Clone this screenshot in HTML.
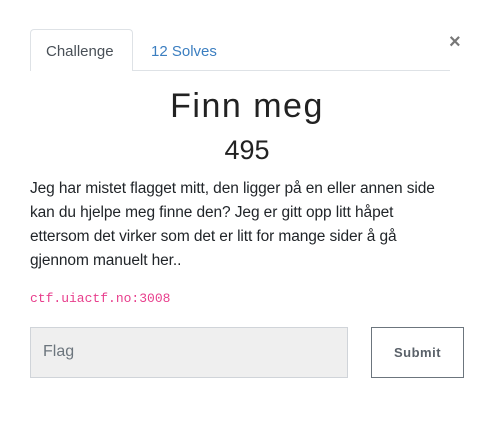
<!DOCTYPE html>
<html><head><meta charset="utf-8"><style>
body{margin:0;background:#fff;width:494px;height:425px;position:relative;font-family:"Liberation Sans",sans-serif;color:#212529;overflow:hidden}
.a{position:absolute;white-space:nowrap}
.tab{left:30px;top:29px;width:103px;height:42px;border:1px solid #dee2e6;border-bottom:none;border-radius:4px 4px 0 0;background:#fff;box-sizing:border-box}
</style></head><body>
<div class="a" style="left:30px;top:70px;width:420px;height:1px;background:#dee2e6"></div>
<div class="a tab"></div>
<div class="a" style="left:46px;top:43px;font-size:15px;color:#495057">Challenge</div>
<div class="a" style="left:151px;top:43px;font-size:15px;color:#3b7ec0">12 Solves</div>
<div class="a" style="left:449px;top:31px;font-size:20px;font-weight:bold;color:#777">×</div>
<div class="a" style="left:0;width:494px;text-align:center;top:87px;font-size:34px;letter-spacing:1.5px;color:#222">Finn meg</div>
<div class="a" style="left:0;width:494px;text-align:center;top:135px;font-size:27px;color:#222">495</div>
<div class="a" style="left:30px;top:177px;font-size:15.5px;line-height:24px;letter-spacing:-0.1px">Jeg har mistet flagget mitt, den ligger på en eller annen side<br>kan du hjelpe meg finne den? Jeg er gitt opp litt håpet<br>ettersom det virker som det er litt for mange sider å gå<br>gjennom manuelt her..</div>
<div class="a" style="left:30px;top:291px;font-family:'Liberation Mono',monospace;font-size:13px;color:#e83e8c">ctf.uiactf.no:3008</div>
<div class="a" style="left:30px;top:327px;width:318px;height:51px;box-sizing:border-box;background:#efefef;border:1px solid #d0d4d9"></div>
<div class="a" style="left:43px;top:343px;font-size:16px;color:#6c757d">Flag</div>
<div class="a" style="left:371px;top:327px;width:93px;height:51px;box-sizing:border-box;border:1px solid #6c757d;text-align:center;line-height:49px;font-size:13px;font-weight:bold;color:#5a6169;letter-spacing:0.5px">Submit</div>
</body></html>
